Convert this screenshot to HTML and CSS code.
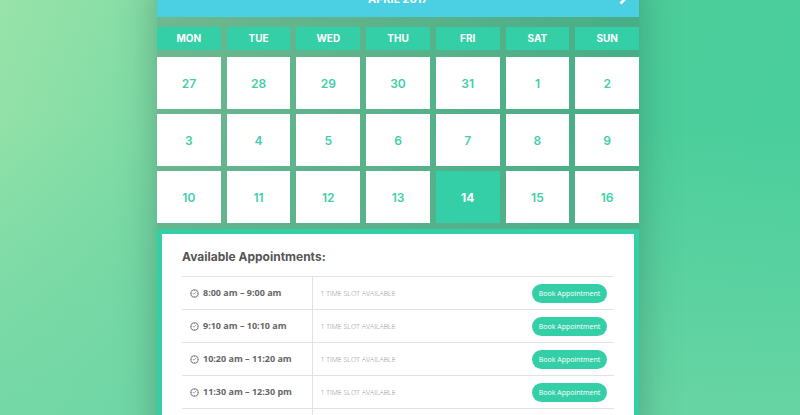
FILE: index.html
```html
<!DOCTYPE html>
<html lang="en">
<head>
    <meta charset="UTF-8">
    <meta name="viewport" content="width=device-width, initial-scale=1">
    <title>Book an appointment</title>
    <link rel="stylesheet" href="styles.css">
</head>
<body>
    <svg width="0" height="0" class="sprite" aria-hidden="true">
        <symbol id="clock" viewBox="0 0 16 16">
            <circle cx="8" cy="8" r="6.7" fill="none" stroke="currentColor" stroke-width="1.8"/>
            <path d="M8 1.5v2M8 12.5v2M1.5 8h2M12.5 8h2M11 5 8 8.4H5" fill="none" stroke="currentColor" stroke-width="1.4"/>
        </symbol>
    </svg>

    <main class="calendar">
        <header class="month-bar">
            <h1 class="month">APRIL 2017</h1>
            <button class="next" aria-label="Next month">
                <svg width="8" height="12" viewBox="0 0 8 12"><path d="M1.5 1.5 6 6l-4.5 4.5" fill="none" stroke="#fff" stroke-width="2.6"/></svg>
            </button>
        </header>

        <div class="weekdays">
            <span>MON</span>
            <span>TUE</span>
            <span>WED</span>
            <span>THU</span>
            <span>FRI</span>
            <span>SAT</span>
            <span>SUN</span>
        </div>

        <div class="days">
            <button class="day">27</button>
            <button class="day">28</button>
            <button class="day">29</button>
            <button class="day">30</button>
            <button class="day">31</button>
            <button class="day">1</button>
            <button class="day">2</button>
            <button class="day">3</button>
            <button class="day">4</button>
            <button class="day">5</button>
            <button class="day">6</button>
            <button class="day">7</button>
            <button class="day">8</button>
            <button class="day">9</button>
            <button class="day">10</button>
            <button class="day">11</button>
            <button class="day">12</button>
            <button class="day">13</button>
            <button class="day active">14</button>
            <button class="day">15</button>
            <button class="day">16</button>
        </div>

        <section class="appointments">
            <h2>Available Appointments:</h2>
            <table class="slots">
                <tr>
                    <th class="time"><svg class="clock"><use href="#clock"/></svg>8:00 am – 9:00 am</th>
                    <td class="available">1 TIME SLOT AVAILABLE</td>
                    <td class="action"><button class="book">Book Appointment</button></td>
                </tr>
                <tr>
                    <th class="time"><svg class="clock"><use href="#clock"/></svg>9:10 am – 10:10 am</th>
                    <td class="available">1 TIME SLOT AVAILABLE</td>
                    <td class="action"><button class="book">Book Appointment</button></td>
                </tr>
                <tr>
                    <th class="time"><svg class="clock"><use href="#clock"/></svg>10:20 am – 11:20 am</th>
                    <td class="available">1 TIME SLOT AVAILABLE</td>
                    <td class="action"><button class="book">Book Appointment</button></td>
                </tr>
                <tr>
                    <th class="time"><svg class="clock"><use href="#clock"/></svg>11:30 am – 12:30 pm</th>
                    <td class="available">1 TIME SLOT AVAILABLE</td>
                    <td class="action"><button class="book">Book Appointment</button></td>
                </tr>
                <tr>
                    <th class="time"></th>
                    <td class="available"></td>
                    <td class="action"></td>
                </tr>
            </table>
        </section>
    </main>
</body>
</html>
```

FILE: styles.css
```css
* {
    box-sizing: border-box;
}
body {
    margin: 0;
    padding-right: 4px;
    height: 100vh;
    overflow: hidden;
    font-family: 'Open Sans', sans-serif;
    background:
        linear-gradient(to bottom, rgba(112, 214, 166, 0) 30%, rgba(112, 214, 166, 0.8) 100%),
        linear-gradient(112deg, #98e3a9 0%, #78d9a4 26%, #4dce9b 66%, #48ce9c 100%);
}
button {
    border: none;
    padding: 0;
    cursor: pointer;
}
.sprite {
    position: absolute;
}
.calendar {
    width: 90%;
    max-width: 482px;
    margin: -20px auto 0;
    background-color: rgba(60, 90, 80, 0.27);
    box-shadow: 0 0 36px rgba(40, 90, 70, 0.4);
}
.month-bar {
    display: flex;
    align-items: center;
    height: 37px;
    padding: 0 12px 0 20px;
    background-color: #4bcfe2;
}
.month {
    flex: 1;
    margin: 0;
    font-family: Inter, sans-serif;
    font-size: 11px;
    font-weight: 700;
    color: #fff;
    text-align: center;
}
.next {
    display: flex;
    background: none;
}
.weekdays, .days {
    display: grid;
    grid-template-columns: repeat(7, 1fr);
    gap: 5px 6px;
    font-family: Inter, sans-serif;
}
.weekdays {
    padding: 10px 0 7px;
}
.weekdays span {
    height: 23px;
    line-height: 23px;
    font-size: 10px;
    font-weight: 700;
    color: #fff;
    text-align: center;
    background-color: #34cfa7;
}
.day {
    height: 52px;
    font-family: inherit;
    font-size: 12px;
    font-weight: 600;
    color: #41cfa7;
    background-color: #fff;
}
.day.active {
    font-weight: 700;
    color: #fff;
    background-color: #34cfa7;
}
.appointments {
    margin-top: 6px;
    padding: 14px 20px 20px;
    border: 5px solid #34cfa7;
    background-color: #fff;
}
.appointments h2 {
    margin: 0 0 10px;
    font-family: Inter, sans-serif;
    font-size: 12px;
    line-height: 18px;
    font-weight: 700;
    color: #555;
}
.slots {
    width: 100%;
    border-collapse: collapse;
}
.slots tr {
    height: 33px;
    border-top: 1px solid #e2e2e2;
}
.slots th, .slots td {
    padding: 0 0 0 8px;
    text-align: left;
    white-space: nowrap;
}
.slots .time {
    width: 130px;
    padding-bottom: 2px;
    border-right: 1px solid #e2e2e2;
    font-size: 9px;
    font-weight: 700;
    color: #666;
}
.clock {
    width: 9px;
    height: 9px;
    margin-right: 4px;
    color: #888;
    vertical-align: middle;
}
.slots .available {
    font-size: 7px;
    font-weight: 300;
    color: #888;
}
.slots .action {
    padding-right: 7px;
    font-size: 7px;
    line-height: 19px;
    text-align: right;
}
.book {
    width: 75px;
    height: 19px;
    border-radius: 10px;
    font-family: inherit;
    font-size: 7px;
    font-weight: 500;
    color: #fff;
    background-color: #34cfa7;
    vertical-align: middle;
}
```
